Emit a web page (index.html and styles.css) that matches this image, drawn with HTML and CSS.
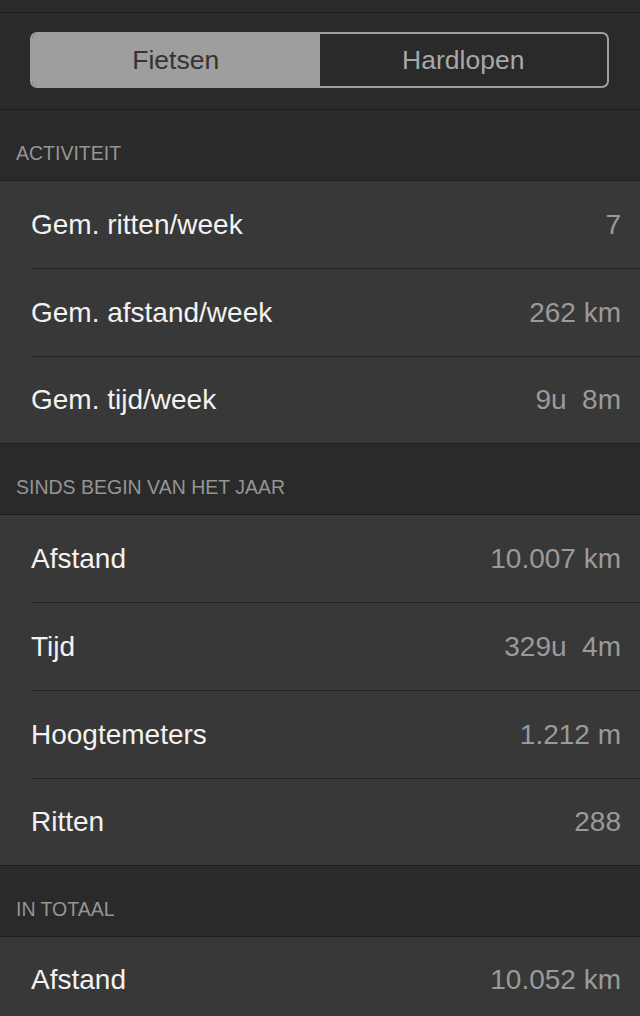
FILE: index.html
```html
<!DOCTYPE html>
<html lang="nl">
<head>
    <meta charset="UTF-8">
    <meta name="viewport" content="width=device-width, initial-scale=1.0">
    <title>Statistieken</title>
    <link rel="stylesheet" href="styles.css">
</head>
<body>

<div class="topbar"></div>

<div class="segment-wrap">
    <div class="segment">
        <div class="segment-item active">Fietsen</div>
        <div class="segment-item">Hardlopen</div>
    </div>
</div>

<div class="section-header">ACTIVITEIT</div>
<div class="group">
    <div class="row"><span class="label">Gem. ritten/week</span><span class="value">7</span></div>
    <div class="row"><span class="label">Gem. afstand/week</span><span class="value">262 km</span></div>
    <div class="row"><span class="label">Gem. tijd/week</span><span class="value">9u&nbsp; 8m</span></div>
</div>

<div class="section-header">SINDS BEGIN VAN HET JAAR</div>
<div class="group">
    <div class="row"><span class="label">Afstand</span><span class="value">10.007 km</span></div>
    <div class="row"><span class="label">Tijd</span><span class="value">329u&nbsp; 4m</span></div>
    <div class="row"><span class="label">Hoogtemeters</span><span class="value">1.212 m</span></div>
    <div class="row"><span class="label">Ritten</span><span class="value">288</span></div>
</div>

<div class="section-header">IN TOTAAL</div>
<div class="group">
    <div class="row"><span class="label">Afstand</span><span class="value">10.052 km</span></div>
</div>

</body>
</html>
```

FILE: styles.css
```css
body {
    font-family: "Liberation Sans", Arial, sans-serif;
    margin: 0;
    padding: 0;
    background-color: #2a2a2a;
    color: #f2f2f2;
}

.topbar {
    height: 12px;
    border-bottom: 1px solid #1c1c1c;
}

.segment-wrap {
    padding: 19px 31px 21px 30px;
    border-bottom: 1px solid #1c1c1c;
}

.segment {
    display: flex;
    height: 52px;
    border: 2px solid #9e9e9e;
    border-radius: 7px;
    overflow: hidden;
}

.segment-item {
    flex: 1 1 0;
    display: flex;
    align-items: center;
    justify-content: center;
    font-size: 26.5px;
    color: #a8a8a8;
}

.segment-item.active {
    background-color: #9e9e9e;
    color: #333;
}

.section-header {
    height: 71px;
    box-sizing: border-box;
    padding: 32px 16px 0;
    font-size: 19.5px;
    color: #959595;
    border-bottom: 1px solid #1c1c1c;
}

.group {
    background-color: #383838;
    border-bottom: 1px solid #1c1c1c;
}

.row {
    display: flex;
    justify-content: space-between;
    align-items: center;
    height: 87px;
    margin-left: 32px;
    padding-right: 19px;
    border-bottom: 1px solid #222;
}

.row:last-child {
    height: 86px;
    border-bottom: none;
}

.label {
    margin-left: -1px;
    font-size: 28px;
}

.value {
    font-size: 28px;
    color: #9a9a9a;
}
```
